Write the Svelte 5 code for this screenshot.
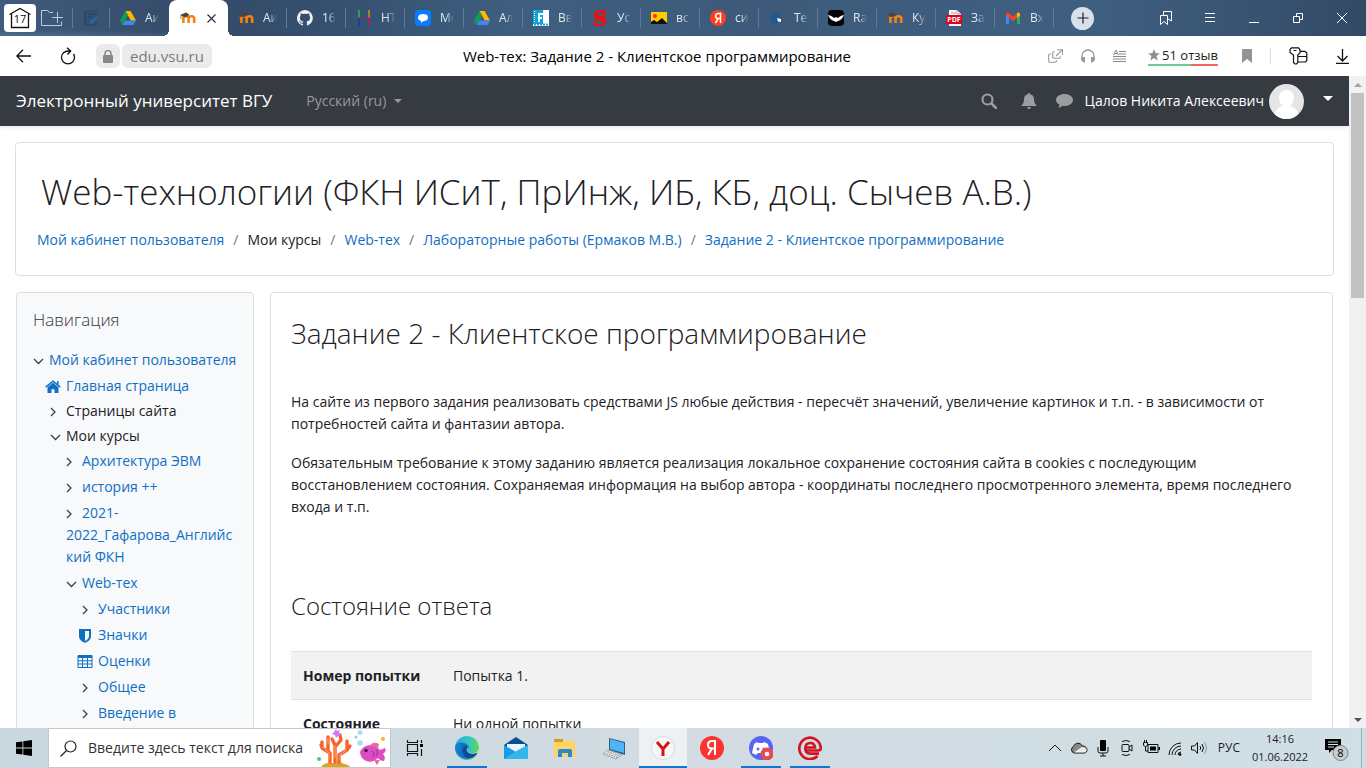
<script>
  const tabs = [
    { icon: 'drive', text: 'Аи' },
    { icon: 'moodle', text: '', active: true },
    { icon: 'moodle', text: 'Аи' },
    { icon: 'github', text: '16' },
    { icon: 'html', text: 'HT' },
    { icon: 'chat', text: 'Ме' },
    { icon: 'drive', text: 'Ал' },
    { icon: 'film', text: 'Вв' },
    { icon: 'letters', text: 'Ус' },
    { icon: 'image', text: 'вс' },
    { icon: 'yandex', text: 'си' },
    { icon: 'net', text: 'Те' },
    { icon: 'bird', text: 'Ra' },
    { icon: 'moodle', text: 'Ку' },
    { icon: 'pdf', text: 'За' },
    { icon: 'gmail', text: 'Вх' }
  ];

  const crumbs = [
    { text: 'Мой кабинет пользователя', link: true },
    { text: 'Мои курсы', link: false },
    { text: 'Web-тех', link: true },
    { text: 'Лабораторные работы (Ермаков М.В.)', link: true },
    { text: 'Задание 2 - Клиентское программирование', link: true }
  ];

  const tree = [
    {
      icon: 'down', text: 'Мой кабинет пользователя', link: true, children: [
        { icon: 'home', text: 'Главная страница', link: true },
        { icon: 'right', text: 'Страницы сайта' },
        {
          icon: 'down', text: 'Мои курсы', children: [
            { icon: 'right', text: 'Архитектура ЭВМ', link: true },
            { icon: 'right', text: 'история ++', link: true },
            { icon: 'right', text: '2021-2022_Гафарова_Английский ФКН', link: true },
            {
              icon: 'down', text: 'Web-тех', link: true, children: [
                { icon: 'right', text: 'Участники', link: true },
                { icon: 'shield', text: 'Значки', link: true },
                { icon: 'table', text: 'Оценки', link: true },
                { icon: 'right', text: 'Общее', link: true },
                { icon: 'right', text: 'Введение в', link: true }
              ]
            }
          ]
        }
      ]
    }
  ];

  const apps = [
    { icon: 'edge', label: 'Microsoft Edge', running: true },
    { icon: 'mail', label: 'Почта' },
    { icon: 'folder', label: 'Проводник' },
    { icon: 'laptop', label: 'Компьютер' },
    { icon: 'ybrowser', label: 'Yandex Browser', active: true },
    { icon: 'ya', label: 'Яндекс' },
    { icon: 'discord', label: 'Discord', running: true },
    { icon: 'ered', label: 'e', running: true }
  ];
</script>

{#snippet favicon(name)}
  <svg class="favicon" viewBox="0 0 16 16" aria-hidden="true">
    {#if name === 'drive'}
      <path d="M5.4 1h5.2L16 10.4h-5.2z" fill="#ffba00" />
      <path d="M5.4 1 8 5.6 2.7 15 0 10.4z" fill="#0f9d58" />
      <path d="M5.3 10.4H16L13.3 15H2.7z" fill="#4285f4" />
    {:else if name === 'moodle'}
      <path d="M3.4 13V8.6q0-2.3 2.600-2.3t2.600 2.3V13M8.600 13V8.6q0-2.3 2.900-2.3 2.700 0 2.700 2.3V13" fill="none" stroke="#f98012" stroke-width="2.600" />
      <path d="M0 5 6 2.6 9 4.2 8 6.6 4 7z" fill="#4a4540" />
      <path d="M1 5.2v4" stroke="#6a625a" stroke-width=".8" />
    {:else if name === 'github'}
      <path fill="#eef2f6" d="M8 0a8 8 0 0 0-2.5 15.6c.4.1.5-.2.5-.4v-1.5c-2.2.5-2.7-.9-2.7-.9-.4-.9-.9-1.2-.9-1.2-.7-.5.1-.5.1-.5.8.1 1.2.8 1.2.8.7 1.3 1.900.9 2.300.7.1-.5.3-.9.5-1.100-1.800-.2-3.600-.9-3.600-4 0-.9.3-1.600.8-2.100-.1-.2-.4-1 .1-2.100 0 0 .7-.2 2.200.8a7.500 7.500 0 0 1 4 0c1.500-1 2.200-.8 2.200-.8.4 1.100.2 1.900.1 2.100.5.6.8 1.300.8 2.100 0 3.100-1.900 3.700-3.600 3.900.3.300.5.8.5 1.500v2.200c0 .2.100.5.6.4A8 8 0 0 0 8 0z" />
    {:else if name === 'html'}
      <path d="M3 0v8" stroke="#2fe000" stroke-width="1.200" /><path d="M13 0v8" stroke="#ff9d00" stroke-width="1.200" />
      <path d="M3 8v8" stroke="#0a28ff" stroke-width="1.200" /><path d="M13 8v8" stroke="#e6006e" stroke-width="1.200" />
      <path d="M3 7.500h10" stroke="#803068" />
    {:else if name === 'chat'}
      <rect width="16" height="16" rx="3.500" fill="#0a7cff" />
      <path d="M3 7.500C3 5 5 4 8 4s5 1 5 3.500S11 11 8.500 11L6 13v-2.200C4 10.500 3 9.500 3 7.500z" fill="#fff" />
    {:else if name === 'film'}
      <path d="M0 0h16v16H0z" fill="#fff" /><path d="M0 0h10v14H0z" fill="#08a4df" />
      <path d="M5 3h5v2H7v2h2v2H7v3H5z" fill="#fff" />
      <path d="M1.500 1v12" stroke="#fff" stroke-dasharray="1 1" /><path d="M1 14.500h14" stroke="#08a4df" stroke-width="2" stroke-dasharray="2 1" />
    {:else if name === 'letters'}
      <path d="M13.500 1v5h-1.200C11.500 3.500 10 2 7.800 2 6.300 2 5.500 2.700 5.500 3.700c0 3 8.500 1.300 8.500 7.100 0 3-2.400 5.200-5.800 5.200-2 0-2.900-.8-4-.8-.5 0-.8.300-1 .8H2v-5.500h1.200C4 13.200 5.600 15 8 15c1.600 0 2.500-.8 2.500-1.900C10.500 10 2.200 11.300 2.200 5.300 2.200 2.200 4.600 0 7.600 0c2 0 2.800.9 3.800.9.5 0 .7-.3.900-.7h1.200z" fill="#f00d0d" stroke="#f00d0d" stroke-width=".6" />
    {:else if name === 'image'}
      <path d="M0 2h16v12H0z" fill="#fc0" /><circle cx="4" cy="6" r="2" fill="#f22" />
      <path d="M0 14v-2l3-2 3 2 5-4 5 5v1z" fill="#111" />
    {:else if name === 'yandex'}
      <circle cx="8" cy="8" r="8" fill="#fc3f1d" />
      <path d="M10.500 13V3.500H8.300C6.300 3.500 5.600 4.900 5.600 6.200c0 1.400.8 2.400 2.500 2.400h2.300M8.200 8.600 5.500 13" fill="none" stroke="#fff" stroke-width="1.500" />
    {:else if name === 'net'}
      <g fill="none" stroke="#1d5a94" stroke-width="1.300"><circle cx="7" cy="8" r="4.500" /><path d="M7 1v14M0 6l14 5M2 13 13 3M2 3l10 10" /></g>
      <path d="m8 8 4 1v3l-3-.5z" fill="#fff" />
    {:else if name === 'bird'}
      <rect width="16" height="16" rx="4" fill="#050505" />
      <path d="M0 5q4 .5 6 3l2-1 2 1q2-2.500 6-3-2 5-6 6l-2 1-2-1Q2 10 0 5z" fill="#fff" />
    {:else if name === 'pdf'}
      <path d="M3 0h8l4 4v12H3z" fill="#f5f5f5" /><path d="M11 0v4h4M5 3h5" fill="none" stroke="#aaa" />
      <rect y="5" width="16" height="9" rx="1" fill="#e2001a" />
      <text x="8" y="12" text-anchor="middle" font-size="7" font-weight="700" fill="#fff">PDF</text>
    {:else if name === 'gmail'}
      <path d="M1 14V4l3 2v8z" fill="#4285f4" /><path d="M12 14V6l3-2v10z" fill="#34a853" />
      <path d="M1 4q0-2 2-1.500L8 6.500l5-4v4.700L8 11 1 5.600z" fill="#ea4335" /><path d="M12 3.200q2-1.500 3 .5v2L12 8z" fill="#fbbc04" />
    {/if}
  </svg>
{/snippet}

{#snippet treeIcon(name)}
  <svg class="node-icon" class:wide={['home', 'shield', 'table'].includes(name)} viewBox="0 0 16 16" aria-hidden="true">
    {#if name === 'down'}
      <path d="m1 6 4.500 4.500L10 6" fill="none" stroke="#3b4045" stroke-width="1.300" />
    {:else if name === 'right'}
      <path d="m1 4 4 4-4 4" fill="none" stroke="#3b4045" stroke-width="1.300" />
    {:else if name === 'home'}
      <path d="M8 3.700 13.500 8.300V14H9.500v-3.800h-3V14h-4V8.300z" fill="#0f6fc5" />
      <path d="m.7 8.200 7.300-6 7.300 6M12.800 2v4" fill="none" stroke="#0f6fc5" stroke-width="1.500" />
    {:else if name === 'shield'}
      <path d="M2 1h12v7c0 4-4 6-6 7-2-1-6-3-6-7z" fill="#0f6fc5" />
      <path d="M8 3h4v5c0 2.500-2 4-4 5z" fill="#f8f9fa" />
    {:else if name === 'table'}
      <rect x=".5" y="1" width="15" height="13" rx="1" fill="#0f6fc5" />
      <path d="M1.500 4h3.500v2.300H1.500zM6 4h4v2.300H6zM11 4h3.500v2.300H11zM1.500 7.300h3.500v2.300H1.500zM6 7.300h4v2.300H6zM11 7.300h3.500v2.300H11zM1.500 10.600h3.500v2.300H1.500zM6 10.600h4v2.300H6zM11 10.600h3.500v2.300H11z" fill="#f8f9fa" />
    {/if}
  </svg>
{/snippet}

{#snippet branch(items, level)}
  <ul class="tree level-{level}">
    {#each items as item}
      <li>
        <p>{@render treeIcon(item.icon)}{#if item.link}<a href="#top">{item.text}</a>{:else}<span>{item.text}</span>{/if}</p>
        {#if item.children}{@render branch(item.children, level + 1)}{/if}
      </li>
    {/each}
  </ul>
{/snippet}

{#snippet appIcon(name)}
  <svg class="app-icon" viewBox="0 0 24 24" aria-hidden="true">
    {#if name === 'edge'}
      <defs>
        <linearGradient id="edgeTop" x1="0" x2="1"><stop offset="0" stop-color="#2aa5e0" /><stop offset=".6" stop-color="#36c6c0" /><stop offset="1" stop-color="#62d84e" /></linearGradient>
        <linearGradient id="edgeLow" x1="0" x2="1"><stop offset="0" stop-color="#1683d8" /><stop offset="1" stop-color="#0c4b94" /></linearGradient>
      </defs>
      <circle cx="12" cy="12" r="12" fill="url(#edgeTop)" />
      <path d="M0 12C0 7 5 5.500 9 7c4 1.300 5 4 5 5-1 1-3 3 0 5 2 1.300 6 1 8.500-.5A12 12 0 0 1 0 12z" fill="url(#edgeLow)" />
      <path d="M9.500 10c-4 3-2 11 4 12 4 .5 7-2.500 8.500-5-4 2-11 1-11-4 0-1 .5-2 1-2.500z" fill="#0d4d98" />
      <path d="M13 11c1.500 1-2 4 1 5.500 4 2 9 0 9.800-3.500V19l-1.500-2.500c-3 2-9 1.500-10.300-2z" fill="#ced9e0" />
    {:else if name === 'mail'}
      <path d="M0 9 12 1l12 8v3H0z" fill="#0a4d91" /><path d="M3 8h18v8H3z" fill="#e8f4fb" />
      <path d="M0 9l12 7L24 9v14H0z" fill="#1a9be6" /><path d="M0 23 14 14l10-5v14z" fill="#35b5ee" />
    {:else if name === 'folder'}
      <path d="M1 3h9l2 2h10v16H1z" fill="#ffd465" /><path d="M1 3h9v3H1z" fill="#dc9d14" />
      <path d="M5 21v-6q0-2 2-2h10q2 0 2 2v6h-4v-4H9v4z" fill="#2b88cf" />
    {:else if name === 'laptop'}
      <path d="m7 2 16 4v13L7 14z" fill="#315f86" /><path d="m8 3 14 4v10L8 13z" fill="#4db4f6" />
      <path d="m6 14 14 5-6 4-13-5z" fill="#e8ebed" stroke="#8f989d" stroke-width=".8" />
      <path d="m4.500 17.500 11 4M6 15.800l11 4" stroke="#8f989d" stroke-width="1.200" stroke-dasharray="1.500 1" />
    {:else if name === 'ybrowser'}
      <circle cx="12" cy="12" r="11.500" fill="#f7f7f7" stroke="#d9dbdc" />
      <path d="m6 6 6 7 6-7M12 12v8" fill="none" stroke="#d51317" stroke-width="3" />
    {:else if name === 'ya'}
      <circle cx="12" cy="12" r="12" fill="#fc3333" />
      <path d="M15 19V5h-3C9 5 8 7 8 9s1.300 3.500 4 3.500h2M12 12.500 8 19" fill="none" stroke="#fff" stroke-width="2" />
    {:else if name === 'discord'}
      <circle cx="12" cy="12" r="12" fill="#5865f2" />
      <path d="M8 6 5 8l-2 9 4 2 2-2h6l2 2 4-2-2-9-4-2-1 1h-5z" fill="#fff" /><circle cx="9" cy="13" r="1.500" fill="#5865f2" /><circle cx="15" cy="13" r="1.500" fill="#5865f2" />
      <circle cx="18" cy="18" r="6.500" fill="#e8484f" /><circle cx="18" cy="18" r="2.300" fill="#fff" />
    {:else if name === 'ered'}
      <path d="M19.500 20A10.700 10.700 0 1 1 22.700 12.500q0 2-2.500 2H7.500" fill="none" stroke="#d4111e" stroke-width="2.600" />
      <path d="M7.500 11.500h9.500q-.5-4.500-4.700-4.500-5 0-5 5.300t5 5.300H21" fill="none" stroke="#d4111e" stroke-width="2.600" />
    {/if}
  </svg>
{/snippet}

<div class="desktop" id="top">
  <header class="tabstrip">
    <button class="home-tab" aria-label="17">
      <svg width="24" height="22" viewBox="0 0 24 22"><path d="M1.500 7.500 12 1.500l10.500 6M3.500 7v13.500h17V7" fill="none" stroke="#111" stroke-width="1.300" /><text x="12" y="16" text-anchor="middle" font-size="11" fill="#111">17</text></svg>
    </button>
    <button class="strip-button collect" aria-label="Группа">
      <svg width="23" height="18" viewBox="0 0 23 18" fill="none" stroke="#b8cce0"><path d="M12 3.500H8.500l-2-2h-6v15h20v-4M16.500 3v11M11 8.500h11" /></svg>
    </button>
    <button class="strip-button pinned" aria-label="Журнал">
      <svg width="16" height="16" viewBox="0 0 16 16"><path d="M2 1h11v14H2z" fill="#34516f" stroke="#2a4562" /><path d="M1 3h2M1 6h2M1 9h2M1 12h2M5 4h5M5 7h4" stroke="#24415f" /><path d="m7 12 6-6 2 2-6 6H7z" fill="#2167a8" /></svg>
    </button>
    <nav class="tabs" aria-label="Вкладки">
      {#each tabs as tab}
        <div class="tab" class:active={tab.active}>
          {@render favicon(tab.icon)}
          {#if tab.active}
            <button class="close" aria-label="Закрыть"><svg width="9" height="9" viewBox="0 0 9 9"><path d="m.5.500 8 8m0-8-8 8" stroke="#222c44" stroke-width="1.100" /></svg></button>
          {:else}
            <span class="tab-text">{tab.text}</span>
          {/if}
        </div>
      {/each}
    </nav>
    <button class="new-tab" aria-label="Новая вкладка"><svg width="12" height="12" viewBox="0 0 12 12"><path d="M6 .5v11M.5 6h11" stroke="#17202c" stroke-width="1.200" /></svg></button>
    <div class="window-controls">
      <button aria-label="Закладки"><svg viewBox="0 0 14 14"><path d="M1.500 4.500h7v9L5 10.500l-3.500 3zM4.500 4V.5h8v9.500L9 8" /></svg></button>
      <button aria-label="Меню"><svg viewBox="0 0 14 14"><path d="M2 2.500h10M2 6.500h10M2 10.500h10" /></svg></button>
      <button aria-label="Свернуть"><svg viewBox="0 0 14 14"><path d="M2 11.500h10" /></svg></button>
      <button aria-label="Восстановить"><svg viewBox="0 0 14 14"><path d="M2.500 5.500h6v6h-6zM5.500 5V2.500h6v6H9" /></svg></button>
      <button aria-label="Закрыть окно"><svg viewBox="0 0 14 14"><path d="m2 2 10 10M12 2 2 12" /></svg></button>
    </div>
  </header>

  <div class="toolbar">
    <button class="plain back" aria-label="Назад"><svg width="16" height="14" viewBox="0 0 16 14"><path d="M7 .8.9 7 7 13.200M1 7h14" fill="none" stroke="#111" stroke-width="1.300" /></svg></button>
    <button class="plain reload" aria-label="Обновить"><svg width="16" height="18" viewBox="0 0 16 18"><path d="M10.500 4H8.500C4.500 4 1.500 6.600 1.500 10.300s3 6.500 6.500 6.500 6.500-2.800 6.500-6.500c0-1.500-.4-2.600-1-3.500M7 .8l3.700 3.200L7.500 7.500" fill="none" stroke="#111" stroke-width="1.300" /></svg></button>
    <button class="chip lock" aria-label="Защищено"><svg width="10" height="13" viewBox="0 0 10 13"><path d="M2 6V3.500a3 3 0 0 1 6 0V6" fill="none" stroke="#888" stroke-width="1.500" /><rect y="5" width="10" height="8" rx="1" fill="#888" /></svg></button>
    <button class="chip domain">edu.vsu.ru</button>
    <div class="page-title">Web-тех: Задание 2 - Клиентское программирование</div>
    <div class="tools">
      <button class="plain" aria-label="Поделиться"><svg width="15" height="14" viewBox="0 0 15 14"><path d="M9 .7h5.400v5.400M13.800 1.300 8 7M7 2.700H6q-1.300 0-1.300 1.300v4q0 1.300 1.300 1.300h5q1.300 0 1.300-1.300V7.500M3 5H2Q.7 5 .7 6.300V12q0 1.300 1.300 1.300h5q1.300 0 1.300-1.300v-1" fill="none" stroke="#999" stroke-width="1.100" /></svg></button>
      <button class="plain" aria-label="Слушать"><svg width="14" height="14" viewBox="0 0 14 14"><path d="M1 11V7a6 6 0 0 1 12 0v4" fill="none" stroke="#999" stroke-width="1.300" /><path d="M0 8h4v5.500H2.500L0 11zM14 8h-4v5.500h1.500L14 11z" fill="#999" /></svg></button>
      <button class="plain" aria-label="Режим чтения"><svg width="13" height="12" viewBox="0 0 13 12"><path d="M6 1.500h7M6 4h7M0 6.500h13M0 9h13M0 11.500h13M.5 5 3 0l2.500 5M1.500 3.500h3" fill="none" stroke="#888" /></svg></button>
      <button class="plain reviews"><svg width="12" height="12" viewBox="0 0 12 12"><path d="m6 0 1.600 4.200H12L8.500 7l1.300 4.600L6 8.900l-3.800 2.700L3.500 7 0 4.200h4.400z" fill="#8c8c8c" /></svg>51 отзыв</button>
      <button class="plain" aria-label="В закладки"><svg width="10" height="14" viewBox="0 0 10 14"><path d="M0 1q0-1 1-1h8q1 0 1 1v13l-5-4-5 4z" fill="#949494" /></svg></button>
      <span class="rule"></span>
      <button class="plain" aria-label="Пароли"><svg width="19" height="18" viewBox="0 0 19 18"><path d="M2.500.8h7l1.500 2v3L8.800 8v7.500L7.500 17H6l-1.500-1.500V8L1 5.500V2.500zM4.500 3.500h3M11 4.300h5L17.800 6v7.500L16.500 15H9.500M9 9.500h8.800" fill="none" stroke="#111" stroke-width="1.200" /></svg></button>
      <button class="plain" aria-label="Загрузки"><svg width="13" height="15" viewBox="0 0 13 15"><path d="M6.500 0v12M1.500 7l5 5 5-5M0 14.300h13" fill="none" stroke="#111" stroke-width="1.300" /></svg></button>
    </div>
  </div>

  <div class="viewport">
    <div class="site">
      <nav class="navbar" aria-label="Сайт">
        <a class="brand" href="#top">Электронный университет ВГУ</a>
        <button class="plain language">Русский (ru) <span class="caret"></span></button>
        <div class="user-tools">
          <button class="plain" aria-label="Поиск"><svg width="16" height="16" viewBox="0 0 16 16"><path d="M11 11l4 4" stroke="#9b9da0" stroke-width="2.500" stroke-linecap="round" /><circle cx="6.500" cy="6.500" r="5" fill="none" stroke="#9b9da0" stroke-width="2.200" /></svg></button>
          <button class="plain bell" aria-label="Уведомления"><svg width="16" height="16" viewBox="0 0 16 16"><path d="M8 0c.7 0 1 .5 1 1.200C11.500 1.600 13 3.500 13 6c0 3.500 1 5 2.500 6.500v.5H.5v-.5C2 11 3 9.500 3 6c0-2.500 1.500-4.400 4-4.800C7 .5 7.300 0 8 0zM6 14h4q-.5 2-2 2t-2-2z" fill="#9b9da0" /></svg></button>
          <button class="plain" aria-label="Сообщения"><svg width="17" height="14" viewBox="0 0 17 14"><path d="M8.500 0C13 0 17 2.500 17 6s-4 6-8.500 6q-1 0-2-.2Q4.500 13.500 2 14q1.300-1.500 1.500-3.300C1.500 9.700 0 8 0 6c0-3.500 4-6 8.500-6z" fill="#9b9da0" /></svg></button>
          <button class="plain user">Цалов Никита Алексеевич
            <svg width="35" height="35" viewBox="0 0 35 35"><defs><clipPath id="avatarClip"><circle cx="17.500" cy="17.500" r="17.500" /></clipPath></defs><g clip-path="url(#avatarClip)"><path d="M0 0h35v35H0z" fill="#e5e5e5" /><path d="M5 35c0-8 4-12 9-13q-4-3-4-8c0-5 3-8 7.500-8s7.500 3 7.500 8q0 5-4 8c5 1 9 5 9 13z" fill="#fff" /></g></svg>
            <span class="caret"></span>
          </button>
        </div>
      </nav>

      <div class="page">
        <section class="card page-header">
          <h1>Web-технологии (ФКН ИСиТ, ПрИнж, ИБ, КБ, доц. Сычев А.В.)</h1>
          <ol class="breadcrumb">
            {#each crumbs as crumb}
              <li>{#if crumb.link}<a href="#top">{crumb.text}</a>{:else}{crumb.text}{/if}</li>
            {/each}
          </ol>
        </section>

        <div class="columns">
          <aside class="card block">
            <h5>Навигация</h5>
            {@render branch(tree, 1)}
          </aside>
          <main class="card content">
            <h2>Задание 2 - Клиентское программирование</h2>
            <div class="intro">
              <p>На сайте из первого задания реализовать средствами JS любые действия - пересчёт значений, увеличение картинок и т.п. - в зависимости от потребностей сайта и фантазии автора.</p>
              <p>Обязательным требование к этому заданию является реализация локальное сохранение состояния сайта в cookies с последующим восстановлением состояния. Сохраняемая информация на выбор автора - координаты последнего просмотренного элемента, время последнего входа и т.п.</p>
            </div>
            <h3>Состояние ответа</h3>
            <table>
              <tbody>
                <tr><th scope="row">Номер попытки</th><td>Попытка 1.</td></tr>
                <tr><th scope="row">Состояние</th><td>Ни одной попытки</td></tr>
              </tbody>
            </table>
          </main>
        </div>
      </div>
    </div>
    <div class="scrollbar" aria-hidden="true">
      <span class="arrow up"></span>
      <span class="thumb"></span>
      <span class="arrow down"></span>
    </div>
  </div>

  <footer class="taskbar">
    <button class="plain start" aria-label="Пуск"><svg width="16" height="16" viewBox="0 0 16 16"><path d="M0 2.300 6.500 1.400v6.200H0zM7.300 1.300 16 0v7.600H7.300zM0 8.400h6.500v6.200L0 13.700zM7.300 8.400H16V16l-8.700-1.300z" /></svg></button>
    <label class="search">
      <svg width="17" height="17" viewBox="0 0 17 17"><circle cx="10.500" cy="6.500" r="5.500" fill="none" stroke="#222" stroke-width="1.200" /><path d="m6.500 10.500-6 6" stroke="#222" stroke-width="1.300" /></svg>
      <input type="text" placeholder="Введите здесь текст для поиска" aria-label="Поиск" />
      <svg class="reef" width="72" height="38" viewBox="0 0 72 38" aria-hidden="true">
        <path d="M5 38q4-5 12-4 6-3 11 1 4 0 6 3z" fill="#e2a21c" />
        <g fill="none" stroke="#f5622d" stroke-width="3.400" stroke-linecap="round" stroke-linejoin="round">
          <path d="M14 33V24L6 19v-6M12 23V8M6 18l-1-2M19 33V16l-3-6M19 18l6-7-1-5M23 33v-7l8-5v-9M31 21l3-4" />
        </g>
        <g fill="none" stroke="#ff9450" stroke-width="1.400" stroke-linecap="round"><path d="M13 30v-6l-6-6M12 15v-5M19 29V17M24 31v-5l6-5" /></g>
        <path d="m20 0 1 2 3-1-1 3 2 2-3 1-2 2-1-3-3-1 2-2z" fill="#d277f5" />
        <circle cx="3" cy="30" r="2" fill="#44cf75" /><circle cx="67" cy="10" r="2" fill="#ffb61c" />
        <circle cx="44" cy="3.500" r="2.500" fill="#a9dcf6" /><circle cx="40" cy="8" r="1.600" fill="#8cd0f3" /><circle cx="44" cy="14" r="2.800" fill="#a9dcf6" />
        <path d="M44 23c3-8 14-9 20-2l5-2q2 3-2 6 3 3 1 7-4 0-6-3c-5 6-17 5-18-6z" fill="#dc4fc0" />
        <path d="M54 16q4-4 9-1l-1 4zM58 31l3 5 3-5z" fill="#f06a94" />
        <circle cx="50" cy="21.500" r="1.800" fill="#40164e" /><path d="M56 22q4 3 0 6M60 21q3 3 0 6" fill="none" stroke="#a732a7" stroke-width="1.200" />
      </svg>
    </label>
    <button class="plain task" aria-label="Представление задач"><svg width="18" height="16" viewBox="0 0 18 16"><path d="M1.500 4.500h10v7h-10zM1.500 0v2.500h10V0M1.500 16v-2.500h10V16M15.500 0v3M15.500 9v7" fill="none" stroke="#111" stroke-width="1.200" /><path d="M14 4h3v3h-3z" /></svg></button>
    {#each apps as app}
      <button class="plain task" class:running={app.running} class:current={app.active} aria-label={app.label}>{@render appIcon(app.icon)}</button>
    {/each}
    <div class="tray">
      <svg viewBox="0 0 18 18"><path d="m3 12 6-6 6 6" /></svg>
      <svg viewBox="0 0 18 18"><path d="M4 14a3.500 3.500 0 0 1-.5-6.500C5 3.500 10 3 12.500 7 16 7 17 9.500 17 11s-1 3-3 3z" fill="#888" /><path d="m4 13.500 8-5.500q4.500 0 4.500 3.200 0 2.300-2.500 2.300z" fill="#eee" stroke="none" /></svg>
      <svg viewBox="0 0 18 18"><rect x="6" y="1" width="6" height="11" rx="1" fill="#000" stroke="none" /><path d="M4 8v4q0 2 2 2h6q2 0 2-2V8M9 14v3M6 17h6" /></svg>
      <svg viewBox="0 0 18 18"><rect x="4" y="5.500" width="7" height="7" rx="1" /><path d="m11 8 3-2v6l-3-2M4 2.500q4-2 8 0M4 15.500q4 2 8 0" /></svg>
      <svg viewBox="0 0 18 18"><path d="M6 5.500h10v8H6z" /><path d="M8 7.500h6v4H8zM16.500 8h1.500v3h-1.500z" fill="#000" stroke="none" /><path d="M1.500 3.500h4v3q-2 2-4 0zM2.500 1v2.500M4.500 1v2.500M3.500 8v4H6" /></svg>
      <svg viewBox="0 0 18 18"><path d="M3 16A12 12 0 0 1 15 4M6 16a9 9 0 0 1 9-9M9 16a6 6 0 0 1 6-6M12 16a3 3 0 0 1 3-3" /><circle cx="14" cy="15.500" r="1" fill="#000" /></svg>
      <svg viewBox="0 0 18 18"><path d="M1.500 7h3l3-3.500v11l-3-3.500h-3zM10 7q1.500 2 0 4M12 5q3 4 0 8" /><path d="M14 3q5 6 0 12" stroke="#8a959b" /></svg>
      <span class="lang">РУС</span>
      <time><span>14:16</span><span>01.06.2022</span></time>
      <button class="plain notes" aria-label="Уведомления Windows"><svg width="26" height="26" viewBox="0 0 26 26"><path d="M1 4h16v11H8l-3 3v-3H1z" /><path d="M4 7h10M4 9.500h10M4 12h6" stroke="#d6e1e6" stroke-width="1.200" /><circle cx="16.500" cy="18" r="7.500" fill="#c6cccf" stroke="#7d8588" /><text x="16.500" y="22" text-anchor="middle" font-size="11">8</text></svg></button>
    </div>
  </footer>
</div>

<style>
  :global(body) { background: #fff; overflow: hidden; }
  .desktop { height: 100vh; display: flex; flex-direction: column; color: #1d2125; font: 14px/22px "Open Sans", "Noto Sans", sans-serif; }
  * { box-sizing: border-box; }
  button { font: inherit; color: inherit; border: 0; padding: 0; margin: 0; }
  a { color: #0f6fc5; text-decoration: none; }
  h1, h2, h3, h5 { margin: 0; font-weight: 300; }
  svg { flex: none; }
  .plain { display: flex; align-items: center; justify-content: center; background: none; }

  .tabstrip { flex: none; height: 36px; display: flex; align-items: center; background: radial-gradient(ellipse at 0 100%, #4b6c91, transparent 12%), linear-gradient(90deg, #405c7d, #344a67 14%, #34506f 24%, #3f5f80 38%, #3d5a7a 55%, #3f5f81 80%, #334a65); }
  .home-tab { width: 32px; height: 28px; margin-left: 4px; background: #fff; border-radius: 4px; display: grid; place-items: center; }
  .strip-button { background: none; display: grid; place-items: center; height: 20px; border-right: 1px solid #60799a; }
  .collect { width: 37px; padding-right: 4px; }
  .pinned { width: 37px; }
  .tabs { display: flex; align-self: stretch; align-items: center; }
  .tab { width: 59px; height: 20px; padding-left: 10px; display: flex; align-items: center; gap: 9px; border-right: 1px solid #60799a; }
  .tab:first-child { border-color: transparent; }
  .tab.active { position: relative; align-self: stretch; height: auto; background: #fff; border: 0; border-radius: 8px 8px 0 0; padding-left: 11px; gap: 11px; }
  .tab.active::before, .tab.active::after { content: ""; position: absolute; bottom: 0; width: 6px; height: 6px; }
  .tab.active::before { right: 100%; background: radial-gradient(circle at 0 0, transparent 6px, #fff 6px); }
  .tab.active::after { left: 100%; background: radial-gradient(circle at 100% 0, transparent 6px, #fff 6px); }
  .favicon { width: 16px; height: 16px; }
  .tab-text { white-space: nowrap; font-size: 12px; color: #e2e9f0; mask-image: linear-gradient(90deg, #000 6px, transparent 14px); }
  .close { background: none; display: grid; place-items: center; }
  .new-tab { width: 23px; height: 23px; margin-left: 17px; border-radius: 50%; background: #d8e0e9; display: grid; place-items: center; }
  .window-controls { margin-left: auto; display: flex; padding-right: 2px; }
  .window-controls button { width: 44px; height: 30px; background: none; display: grid; place-items: center; }
  .window-controls svg { width: 14px; height: 14px; fill: none; stroke: #fff; }

  .toolbar { flex: none; height: 40px; display: flex; align-items: center; padding: 0 17px 0 16px; background: #fff; }
  .reload { margin: 0 20px 0 28px; }
  .chip { height: 24px; background: #ebebeb; border-radius: 6px; color: #7a7a7a; }
  .lock { width: 24px; margin-right: 2px; display: grid; place-items: center; }
  .domain { padding: 0 8px; font-size: 15px; }
  .page-title { flex: 1; padding-left: 54px; text-align: center; color: #000; font-size: 15px; white-space: nowrap; }
  .tools { display: flex; align-items: center; gap: 18px; }
  .reviews { gap: 2px; margin: 0 6px 0 4px; height: 20px; font-size: 13px; color: #222; border-bottom: 2px solid; border-image: linear-gradient(90deg, #72c893 61%, #ee6a5f 61%) 1; }
  .rule { width: 1px; height: 16px; background: #ddd; }
  .tools > :last-child { margin-left: 10px; }

  .viewport { flex: 1; min-height: 0; display: flex; }
  .site { flex: 1; min-width: 0; overflow: hidden; }
  .navbar { height: 50px; display: flex; align-items: center; padding: 0 16px; background: #363a41; box-shadow: 0 2px 4px rgba(0, 0, 0, .08); }
  .brand { color: #fff; font-size: 17px; }
  .language { margin-left: 34px; color: #97999c; }
  .caret { width: 0; height: 0; border: 4px solid transparent; border-top-color: currentColor; border-bottom: 0; margin-left: 8px; }
  .user-tools { margin-left: auto; display: flex; align-items: center; }
  .bell { margin: 0 19px 0 24px; }
  .user { color: #fff; margin-left: 12px; gap: 5px; }
  .user .caret { margin: 0 0 6px 14px; border-width: 5px; border-bottom: 0; }
  .page { padding: 16px 15px 0; }
  .card { border: 1px solid #dcdfe2; border-radius: 4px; background: #fff; }
  .page-header { height: 134px; padding: 24px 21px 0; }
  h1 { padding-left: 4px; font-size: 35px; line-height: 50px; white-space: nowrap; }
  .breadcrumb { list-style: none; margin: 12px 0 0; padding: 0; display: flex; }
  .breadcrumb li + li::before { content: "/"; color: #6c757d; padding: 0 9px; }
  .columns { display: flex; align-items: flex-start; gap: 16px; padding: 16px 1px 0; }
  .block { flex: none; width: 238px; min-height: 480px; background: #f8f9fb; padding: 16px; }
  h5 { font-size: 17px; line-height: 22px; color: #33383d; margin-bottom: 18px; }
  .tree { list-style: none; margin: 0; padding: 0; }
  .tree .tree { padding-left: 16px; }
  .tree .level-2 { padding-left: 17px; }
  .tree p { margin: 0 0 4px; overflow-wrap: anywhere; }
  .level-2 > li > p { margin-bottom: 3px; }
  .node-icon { width: 16px; height: 16px; vertical-align: -4px; }
  .node-icon.wide { margin-left: -5px; margin-right: 5px; }
  .content { flex: 1; min-width: 0; padding: 20px; }
  h2 { font-size: 28px; line-height: 40px; }
  .intro { margin-top: 38px; }
  .intro p { margin: 0 0 17px; }
  h3 { margin-top: 70px; font-size: 24px; line-height: 36px; }
  table { width: 100%; margin-top: 27px; border-collapse: collapse; table-layout: fixed; }
  th, td { text-align: left; padding: 12px; line-height: 23px; border-top: 1px solid #dee2e6; }
  th { width: 150px; white-space: nowrap; }
  tr:nth-child(odd) { background: #f2f2f2; }
  .scrollbar { flex: none; width: 17px; background: #f1f1f1; display: flex; flex-direction: column; align-items: center; }
  .arrow { width: 17px; height: 17px; display: grid; place-items: center; }
  .arrow::before { content: ""; border: 4px solid transparent; }
  .up::before { border-top: 0; border-bottom-color: #a3a3a3; }
  .down { margin-top: auto; }
  .down::before { border-bottom: 0; border-top-color: #505050; }
  .thumb { width: 13px; height: 205px; background: #c1c1c1; }

  .taskbar { flex: none; height: 40px; display: flex; background: linear-gradient(90deg, #cad8e0, #d2dce2 50%, #cfdfe5); }
  .start { width: 48px; }
  .search { width: 343px; display: flex; align-items: center; background: #fff; border: 1px solid #c4c8ca; padding: 0 2px 0 11px; }
  .search input { flex: 1; min-width: 0; margin-left: 11px; padding: 0; border: 0; outline: 0; font: inherit; background: none; }
  .search input::placeholder { color: #333; opacity: 1; }
  .task { width: 48px; margin-right: 1px; border-bottom: 2px solid transparent; padding-top: 2px; }
  .search + .task { margin-right: 4px; }
  .app-icon { width: 24px; height: 24px; }
  .running { background: linear-gradient(#0a78d4, #0a78d4) 50% 100% / 40px 2px no-repeat border-box; }
  .current { background: #edf1f3; border-color: #0a78d4; }
  .tray { margin-left: auto; display: flex; align-items: center; gap: 6px; padding-right: 11px; margin-right: 4px; border-right: 1px solid #9fadb5; }
  .tray > svg { width: 18px; height: 18px; fill: none; stroke: #111; }
  .lang { margin-left: 4px; font-size: 12px; }
  time { display: flex; flex-direction: column; align-items: center; width: 60px; margin-left: 4px; font-size: 11px; line-height: 18px; }
  .notes { margin-left: 8px; }
</style>
